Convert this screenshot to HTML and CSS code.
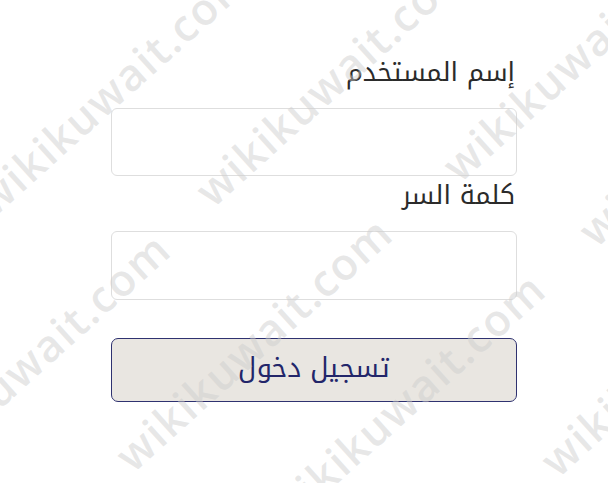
FILE: index.html
```html
<!DOCTYPE html>
<html lang="ar">
<head>
<meta charset="utf-8">
<title>تسجيل دخول</title>
<link rel="stylesheet" href="styles.css">
</head>
<body>
<main class="page">
  <form class="login" dir="rtl">
    <label class="field-label" for="user">إسم المستخدم</label>
    <input class="field" id="user" type="text">
    <label class="field-label field-label--second" for="pass">كلمة السر</label>
    <input class="field field--tall" id="pass" type="password">
    <button class="submit" type="button">تسجيل دخول</button>
  </form>
  <div class="watermark" aria-hidden="true">
    <span class="wm wm-1">wikikuwait.com</span>
    <span class="wm wm-2">wikikuwait.com</span>
    <span class="wm wm-3">wikikuwait.com</span>
    <span class="wm wm-4">wikikuwait.com</span>
    <span class="wm wm-5">wikikuwait.com</span>
    <span class="wm wm-6">wikikuwait.com</span>
    <span class="wm wm-7">wikikuwait.com</span>
    <span class="wm wm-8">wikikuwait.com</span>
  </div>
</main>
</body>
</html>
```

FILE: styles.css
```css
html, body {
  margin: 0;
  padding: 0;
  background: #ffffff;
}

.page {
  position: relative;
  width: 608px;
  height: 483px;
  overflow: hidden;
  background: #ffffff;
}

.login {
  display: flex;
  flex-direction: column;
  align-items: stretch;
  width: 406px;
  margin: 0 0 0 111px;
  padding-top: 55px;
  font-family: "Noto Kufi Arabic", "Noto Sans Arabic", "DejaVu Sans", sans-serif;
}

.field-label {
  display: block;
  font-size: 26px;
  line-height: 36px;
  color: #2b2b2b;
  padding-right: 2px;
}

.field-label--second {
  margin-top: 2px;
}

.field {
  box-sizing: border-box;
  display: block;
  width: 100%;
  height: 68px;
  margin-top: 17px;
  border: 1px solid #dedede;
  border-radius: 6px;
  background: #ffffff;
  outline: none;
  font: inherit;
}

.field--tall {
  height: 69px;
}

.submit {
  box-sizing: border-box;
  display: block;
  width: 100%;
  height: 64px;
  margin-top: 38px;
  border: 1px solid #2f3270;
  border-radius: 7px;
  background: #e9e6e1;
  color: #23266a;
  font-family: "Noto Kufi Arabic", "Noto Sans Arabic", "DejaVu Sans", sans-serif;
  font-size: 27px;
  line-height: 1;
  padding: 0 0 4px;
}

.watermark {
  position: absolute;
  inset: 0;
  pointer-events: none;
}

.wm {
  position: absolute;
  white-space: nowrap;
  font-family: "Open Sans", "DejaVu Sans", sans-serif;
  font-weight: 600;
  font-size: 44px;
  line-height: 44px;
  letter-spacing: 1.5px;
  color: rgba(205, 205, 205, 0.48);
  transform-origin: 0 27px;
  transform: rotate(-42deg);
}

/* start points of each repeated watermark (left end of text midline) */
.wm-1 { left: -15px; top: 183px; }
.wm-2 { left: 205px; top: 173px; }
.wm-3 { left: -97px; top: 454px; }
.wm-4 { left: 452px; top: 148px; }
.wm-5 { left: 125px; top: 438px; }
.wm-6 { left: 588px; top: 213px; }
.wm-7 { left: 278px; top: 494px; }
.wm-8 { left: 550px; top: 443px; }
```
